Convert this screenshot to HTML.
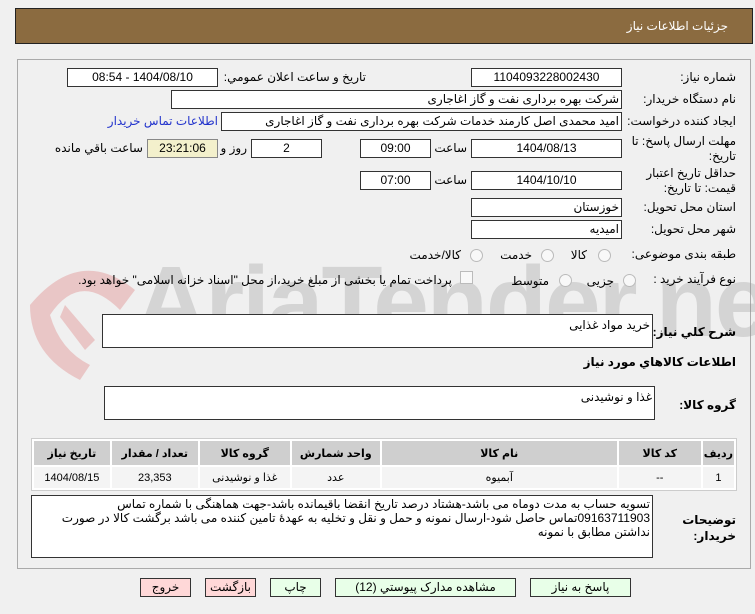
<!DOCTYPE html>
<html><head><meta charset="utf-8"><style>
body{margin:0;width:755px;height:614px;background:#f0f0f0;font-family:"Liberation Sans","DejaVu Sans",sans-serif;font-size:12px;color:#000;position:relative;overflow:hidden}
.a{position:absolute}
.hdr{left:15px;top:8px;width:736px;height:34px;background:#8b6b40;border:1px solid #222;}
.hdr span{position:absolute;right:24px;top:10px;color:#fff;font-size:12px}
.panel{left:17px;top:59px;width:732px;height:508px;border:1px solid #aaa;background:#f0f0f0}
.in{position:absolute;background:#fff;border:1px solid #333;height:17px;box-sizing:content-box;text-align:center;line-height:17px;font-size:12px;direction:rtl}
.in.r{text-align:right;padding-right:2px}
.l{position:absolute;direction:rtl;white-space:nowrap;font-size:12px;letter-spacing:-0.2px}
.b{font-weight:bold}
.rad{position:absolute;width:11px;height:11px;border:1px solid #bbb;border-radius:50%;background:#f8f8f8}
table{position:absolute;left:31px;top:438px;width:706px;border-collapse:separate;border-spacing:2px;background:#fff;border:1px solid #ccc;direction:rtl}
td,th{text-align:center;font-size:11px}
th{background:#cfcfcf;height:22px;font-weight:bold}
td{background:#f4f4f4;height:19px}
.btn{position:absolute;top:578px;height:17px;border:1px solid #333;background:#e8ffe8;text-align:center;line-height:17px;font-size:12px;direction:rtl}
.pk{background:#ffd8d8}
.wm{left:135px;top:245px;font-size:100px;font-weight:bold;color:rgba(150,150,150,.3);letter-spacing:-2px;font-family:"Liberation Sans Narrow","Liberation Sans",sans-serif}
</style></head><body>
<div class="a hdr"><span>جزئیات اطلاعات نیاز</span></div>
<div class="a panel"></div>
<div class="a wm">AriaTender.net</div>
<svg class="a" style="left:20px;top:245px" width="130" height="140" viewBox="0 0 130 140"><path d="M10 60 Q60 0 115 45 L100 65 Q60 25 30 70 Q40 105 70 120 L60 135 Q10 110 10 60Z" fill="rgba(220,120,120,.35)"/><path d="M45 60 L75 95 L65 105 L40 72Z" fill="rgba(220,120,120,.35)"/></svg>

<div class="l" style="right:19px;top:70px">شماره نیاز:</div>
<div class="in" style="left:471px;top:68px;width:149px">1104093228002430</div>
<div class="l" style="right:389px;top:70px">تاریخ و ساعت اعلان عمومي:</div>
<div class="in" style="left:67px;top:68px;width:149px">1404/08/10 - 08:54</div>

<div class="l" style="right:19px;top:92px">نام دستگاه خریدار:</div>
<div class="in r" style="left:171px;top:90px;width:447px">شرکت بهره برداری نفت و گاز اغاجاری</div>

<div class="l" style="right:19px;top:114px">ایجاد کننده درخواست:</div>
<div class="in r" style="left:221px;top:112px;width:397px">امید محمدی اصل کارمند خدمات شرکت بهره برداری نفت و گاز اغاجاری</div>
<div class="l" style="right:537px;top:114px;color:#2233cc">اطلاعات تماس خریدار</div>

<div class="l" style="right:19px;top:134px;line-height:15px">مهلت ارسال پاسخ: تا<br>تاریخ:</div>
<div class="in" style="left:471px;top:139px;width:149px">1404/08/13</div>
<div class="l" style="right:288px;top:141px">ساعت</div>
<div class="in" style="left:360px;top:139px;width:69px">09:00</div>
<div class="in" style="left:251px;top:139px;width:69px">2</div>
<div class="l" style="right:508px;top:141px">روز و</div>
<div class="in" style="left:147px;top:139px;width:69px;background:#f3f0cc;border-color:#888">23:21:06</div>
<div class="l" style="right:612px;top:141px">ساعت باقي مانده</div>

<div class="l" style="right:19px;top:166px;line-height:15px">حداقل تاریخ اعتبار<br>قیمت: تا تاریخ:</div>
<div class="in" style="left:471px;top:171px;width:149px">1404/10/10</div>
<div class="l" style="right:288px;top:173px">ساعت</div>
<div class="in" style="left:360px;top:171px;width:69px">07:00</div>

<div class="l" style="right:19px;top:200px">استان محل تحویل:</div>
<div class="in r" style="left:471px;top:198px;width:147px">خوزستان</div>
<div class="l" style="right:19px;top:222px">شهر محل تحویل:</div>
<div class="in r" style="left:471px;top:220px;width:147px">امیدیه</div>

<div class="l" style="right:19px;top:247px">طبقه بندی موضوعی:</div>
<div class="rad" style="left:598px;top:249px"></div><div class="l" style="right:168px;top:248px">کالا</div>
<div class="rad" style="left:541px;top:249px"></div><div class="l" style="right:223px;top:248px">خدمت</div>
<div class="rad" style="left:470px;top:249px"></div><div class="l" style="right:294px;top:248px">کالا/خدمت</div>

<div class="l" style="right:19px;top:272px">نوع فرآیند خرید :</div>
<div class="rad" style="left:623px;top:274px"></div><div class="l" style="right:141px;top:274px">جزیی</div>
<div class="rad" style="left:559px;top:274px"></div><div class="l" style="right:206px;top:274px">متوسط</div>
<div class="a" style="left:460px;top:271px;width:11px;height:11px;border:1px solid #bbb;background:#f8f8f8"></div>
<div class="l" style="right:303px;top:273px">پرداخت تمام یا بخشی از مبلغ خرید،از محل "اسناد خزانه اسلامی" خواهد بود.</div>

<div class="l b" style="right:19px;top:325px">شرح کلي نیاز:</div>
<div class="in r" style="left:102px;top:314px;width:547px;height:32px;line-height:20px;text-align:right">خرید مواد غذایی</div>
<div class="l b" style="right:19px;top:355px">اطلاعات کالاهاي مورد نیاز</div>
<div class="l b" style="right:19px;top:398px">گروه کالا:</div>
<div class="in r" style="left:104px;top:386px;width:547px;height:32px;line-height:20px;text-align:right">غذا و نوشیدنی</div>

<table>
<tr><th style="width:27px">ردیف</th><th style="width:80px">کد کالا</th><th style="width:233px">نام کالا</th><th style="width:86px">واحد شمارش</th><th style="width:88px">گروه کالا</th><th style="width:84px">تعداد / مقدار</th><th>تاریخ نیاز</th></tr>
<tr><td>1</td><td>--</td><td>آبمیوه</td><td>عدد</td><td>غذا و نوشیدنی</td><td>23,353</td><td>1404/08/15</td></tr>
</table>

<div class="l b" style="right:19px;top:512px;line-height:16px">توضیحات<br>خریدار:</div>
<div class="in r" style="left:31px;top:495px;width:618px;height:60px;line-height:14px;text-align:right;padding-top:1px;font-size:12px;white-space:normal">تسویه حساب به مدت دوماه می باشد-هشتاد درصد تاریخ انقضا باقیمانده باشد-جهت هماهنگی با شماره تماس 09163711903تماس حاصل شود-ارسال نمونه و حمل و نقل و تخلیه  به عهدۀ تامین کننده می باشد  برگشت کالا در صورت نداشتن مطابق با نمونه</div>

<div class="btn" style="left:530px;width:99px">پاسخ به نیاز</div>
<div class="btn" style="left:335px;width:179px">مشاهده مدارک پیوستي (12)</div>
<div class="btn" style="left:270px;width:49px">چاپ</div>
<div class="btn pk" style="left:205px;width:49px">بازگشت</div>
<div class="btn pk" style="left:140px;width:49px">خروج</div>
</body></html>
